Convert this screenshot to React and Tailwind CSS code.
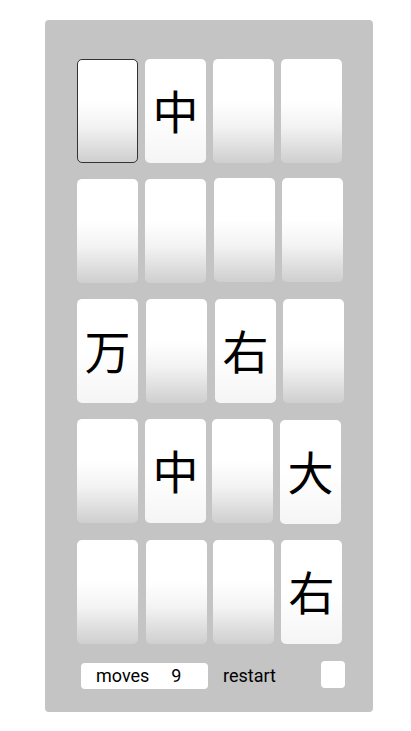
import React from 'react';

const cards = [
  { ch: '', selected: true }, { ch: '中' }, { ch: '' }, { ch: '' },
  { ch: '' }, { ch: '' }, { ch: '', shift: 'ml-[1px] -mt-[1px]' }, { ch: '', shift: 'ml-[1px] -mt-[1px]' },
  { ch: '万' }, { ch: '', shift: 'ml-[1px]' }, { ch: '右', shift: 'ml-[2px]' }, { ch: '', shift: 'ml-[2px]' },
  { ch: '' }, { ch: '中' }, { ch: '', shift: '-ml-[1px]' }, { ch: '大', shift: '-ml-[1px] mt-[1px]' },
  { ch: '' }, { ch: '', shift: 'ml-[1px]' }, { ch: '' }, { ch: '右' },
];

const Card = ({ card }) => {
  const face = card.ch !== '';
  return (
    <div
      className={[
        'flex h-[104px] w-[61px] items-center justify-center rounded-[5px] pb-[5px] text-[46px] leading-none text-black',
        face
          ? 'bg-gradient-to-b from-white from-50% to-[#f5f5f5]'
          : 'bg-gradient-to-b from-white from-40% via-[#f3f3f3] via-65% to-[#cfcfcf]',
        card.selected ? 'border border-[#333]' : '',
        card.shift || '',
      ].join(' ')}
      style={{ fontFamily: '"Noto Sans CJK SC", "Noto Sans", sans-serif' }}
    >
      {card.ch}
    </div>
  );
};

export default function App() {
  return (
    <div className="min-h-[731px] bg-white pt-[20px]" style={{ fontFamily: 'Roboto, "Noto Sans", sans-serif' }}>
      <div className="ml-[45px] flex h-[692px] w-[328px] flex-col rounded-[4px] bg-[#c4c4c4] pl-[32px] pt-[39px]">
        <div className="grid grid-cols-[repeat(4,61px)] gap-x-[7px] gap-y-[16px]">
          {cards.map((c, i) => (
            <Card key={i} card={c} />
          ))}
        </div>
        <div className="mt-[16px] flex items-center text-[18px] text-black">
          <div className="ml-[4px] mt-[2px] flex h-[26px] w-[127px] items-center rounded-[4px] bg-white pl-[15px]">
            <span>moves</span>
            <span className="ml-[22px]">9</span>
          </div>
          <span className="ml-[15px] mt-[2px]">restart</span>
          <div className="ml-[45px] h-[27px] w-[24px] rounded-[4px] bg-white" />
        </div>
      </div>
    </div>
  );
}
